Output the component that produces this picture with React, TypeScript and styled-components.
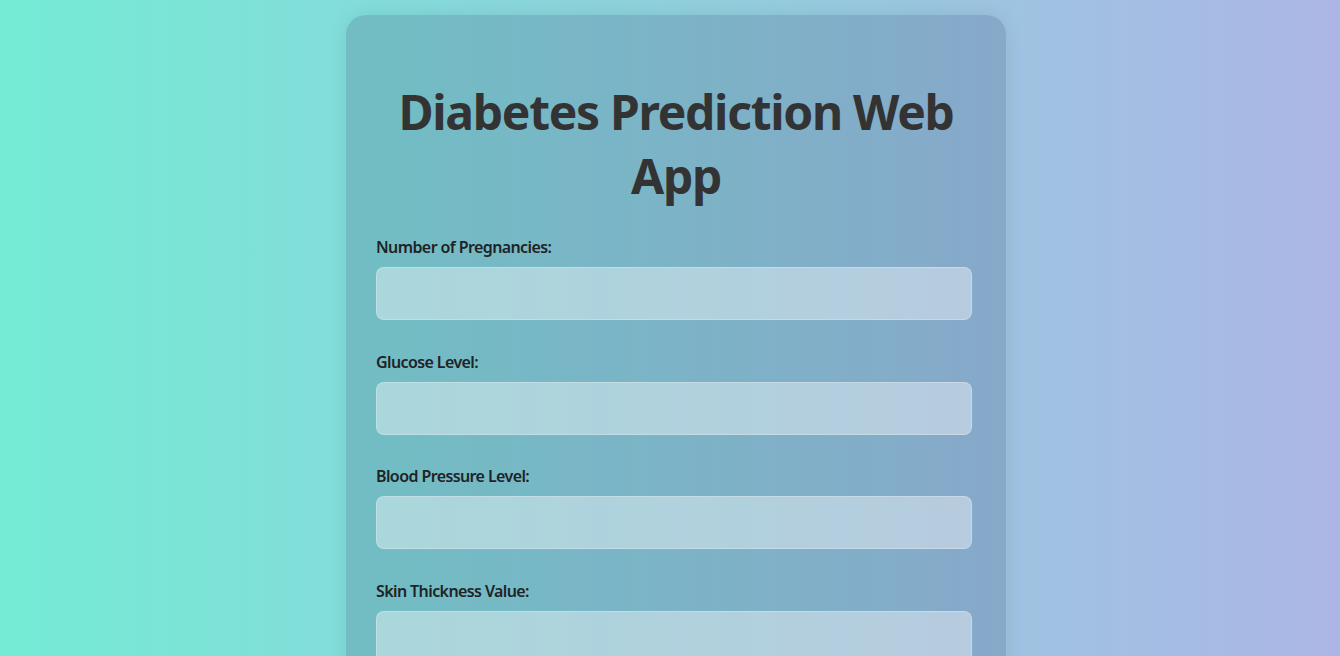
import React from "react";
import styled, { createGlobalStyle } from "styled-components";

const Global = createGlobalStyle`
  html, body { margin: 0; padding: 0; }
  body {
    min-height: 100vh;
    background: linear-gradient(to right, #74ebd5, #acb6e5);
    font-family: "Noto Sans", "Open Sans", Arial, sans-serif;
    color: #222;
  }
`;

const Page = styled.div`
  display: flex;
  justify-content: center;
  padding: 15px 0 0 12px;
  min-height: 100vh;
  box-sizing: border-box;
`;

const Card = styled.main`
  width: 660px;
  box-sizing: border-box;
  padding: 30px;
  border-radius: 20px;
  background: rgba(45, 65, 110, 0.2);
  box-shadow: 0 0 20px rgba(0, 0, 0, 0.08);
`;

const Title = styled.h1`
  margin: 35px 0 29px;
  text-align: center;
  font-size: 48px;
  line-height: 64px;
  font-weight: 700;
  letter-spacing: -1.3px;
  color: #333;
`;

const Field = styled.div`
  display: flex;
  flex-direction: column;
  align-items: flex-start;
  margin-bottom: 31.67px;
`;

const Label = styled.label`
  font-size: 16px;
  line-height: 21px;
  font-weight: 600;
  letter-spacing: -0.6px;
  color: #1f2326;
  margin-bottom: 9px;
`;

const Input = styled.input`
  width: 596px;
  height: 53px;
  box-sizing: border-box;
  border: 1px solid rgba(255, 255, 255, 0.25);
  border-radius: 8px;
  background: rgba(255, 255, 255, 0.4);
  padding: 0 12px;
  font-size: 16px;
  outline: none;
`;

const fields = [
  "Number of Pregnancies:",
  "Glucose Level:",
  "Blood Pressure Level:",
  "Skin Thickness Value:",
  "Insulin Level:",
  "BMI Value:",
];

export default function App() {
  return (
    <>
      <Global />
      <Page>
        <Card>
          <Title>Diabetes Prediction Web App</Title>
          {fields.map((f) => (
            <Field key={f}>
              <Label>{f}</Label>
              <Input type="text" />
            </Field>
          ))}
        </Card>
      </Page>
    </>
  );
}
